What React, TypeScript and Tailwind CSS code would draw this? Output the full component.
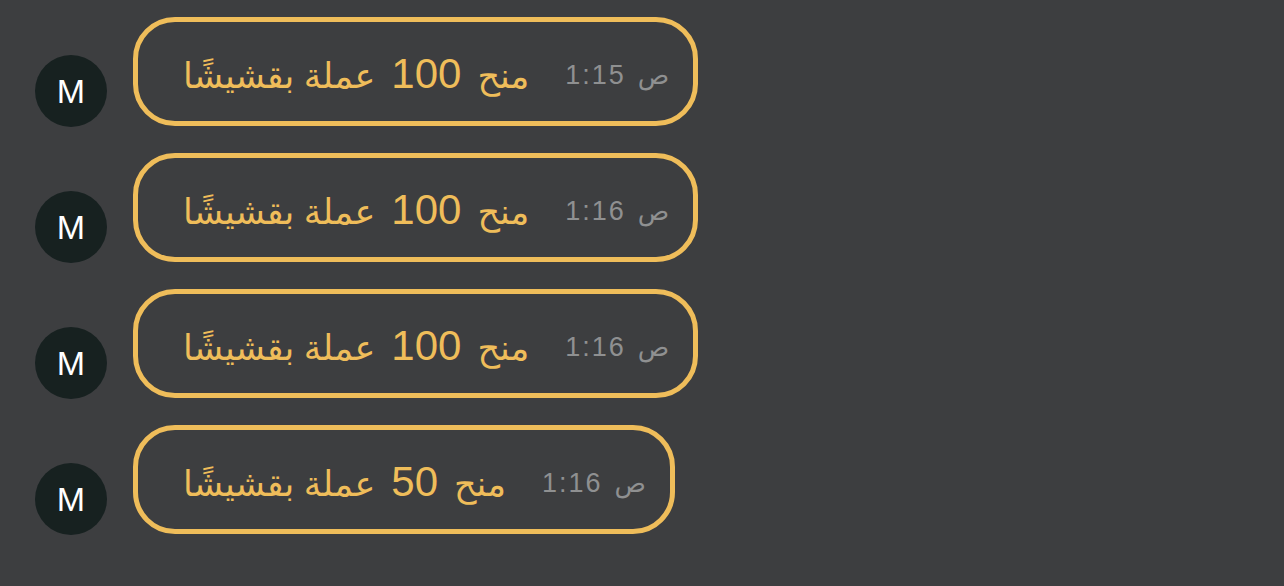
import React from "react";

const rows = [
  { amount: "100", time: "1:15" },
  { amount: "100", time: "1:16" },
  { amount: "100", time: "1:16" },
  { amount: "50", time: "1:16" },
];

export default function App() {
  return (
    <div
      className="w-[1284px] h-[586px] bg-[#3d3e40] pt-[17px] pl-[35px] flex flex-col gap-[26px]"
      style={{ fontFamily: '"Liberation Sans", "DejaVu Sans", sans-serif' }}
    >
      {rows.map((r, i) => (
        <div key={i} className="flex items-start gap-[26px]">
          <div className="mt-[38px] w-[72px] h-[72px] rounded-full bg-[#172120] flex items-center justify-center text-white text-[34px] leading-none">
            M
          </div>
          <div
            dir="rtl"
            className="h-[109px] rounded-[42px] border-[5px] border-[#efbd5a] flex items-center pr-[24px] pl-[45px] gap-[36px]"
          >
            <span className="text-[#8f9091] leading-none mt-[7px] whitespace-nowrap flex items-baseline gap-[12px]">
              <span className="text-[26px]">ص</span>
              <span dir="ltr" className="text-[27px] tracking-[2px]">{r.time}</span>
            </span>
            <span className="text-[#efbd5a] leading-none mt-[5px] whitespace-nowrap flex items-baseline gap-[16px]">
              <span className="text-[35px]">منح</span>
              <span dir="ltr" className="text-[42px]">{r.amount}</span>
              <span className="text-[35px]">عملة بقشيشًا</span>
            </span>
          </div>
        </div>
      ))}
    </div>
  );
}
